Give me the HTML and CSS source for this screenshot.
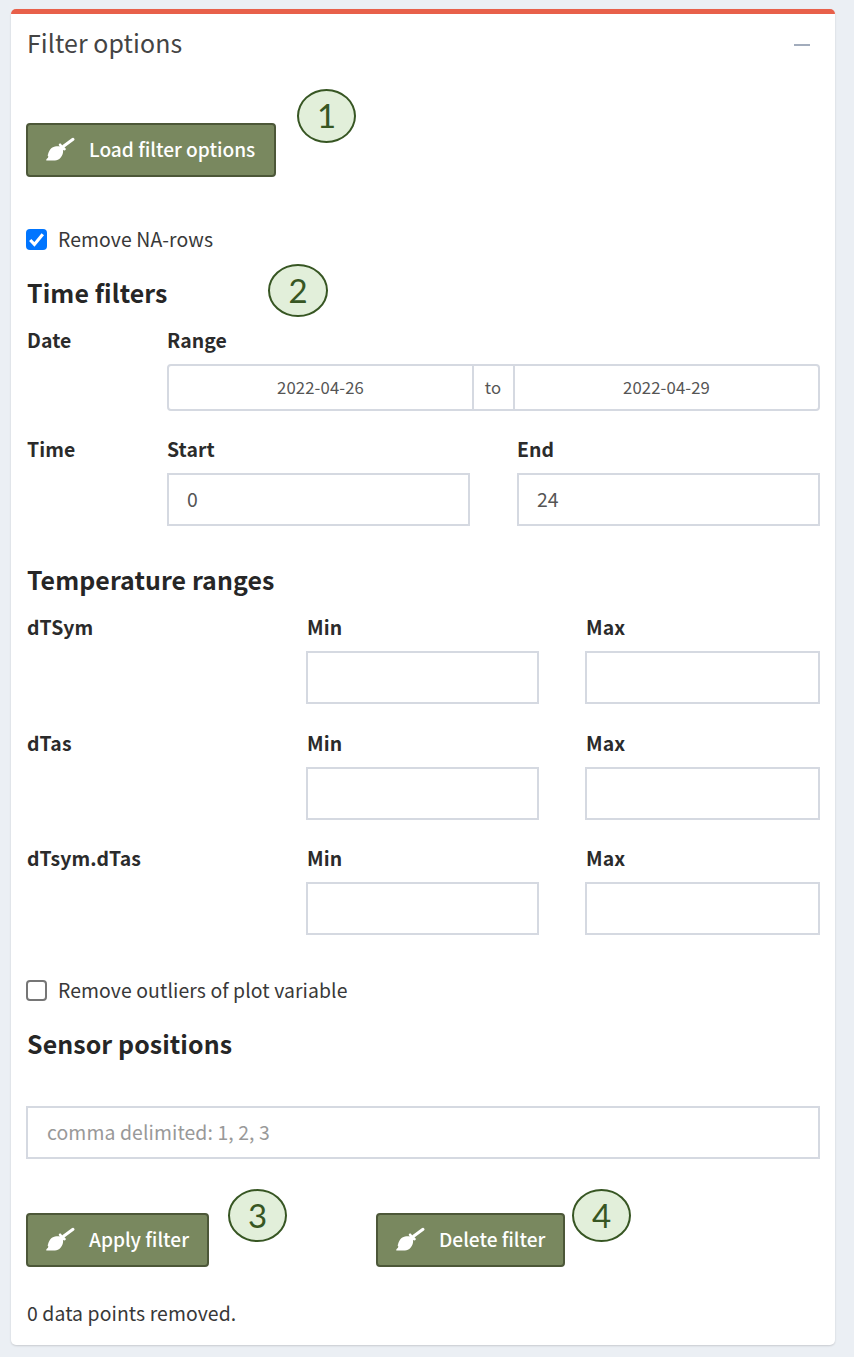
FILE: index.html
```html
<!DOCTYPE html>
<html lang="en">
<head>
<meta charset="utf-8">
<title>Filter options</title>
<link rel="stylesheet" href="styles.css">
</head>
<body>
<svg width="0" height="0" class="defs" aria-hidden="true">
  <symbol id="brush" viewBox="0 0 30 26">
    <path d="M27 2.300L17.500 9.300" fill="none" stroke="#fff" stroke-width="3" stroke-linecap="round"/>
    <path d="M13.300 6.700c1-.6 1.900 0 2.300 1.100l3.900 3.500c.6 1 .2 1.900-1 2.100l-1.500-.5c.9 5.400-3.600 10.700-8 10.700H.8c-1-.3-.6-1.400.3-2.100 1-.8 1.300-1.500 1.100-2.300-.6-.4-.7-1-.2-1.600C3 13.500 5 10.400 9 9.600c2-.4 3.500-.4 4.800-.1l-1-1.500c-.1-.5 0-.9.5-1.300z"/>
  </symbol>
</svg>
<main class="box">
  <header class="box-header">
    <h1 class="title">Filter options</h1>
    <button class="collapse" aria-label="Collapse"></button>
  </header>

  <div class="load-row">
    <button class="btn load"><svg class="icon"><use href="#brush"/></svg><span>Load filter options</span></button>
  </div>

  <label class="check check-na"><span class="tick on"><svg viewBox="0 0 20 20"><path d="M4 10.500l4 4.200 8-9.700"/></svg></span><span>Remove NA-rows</span></label>

  <h2 class="heading h-time">Time filters</h2>
  <section class="row time-row first">
    <b>Date</b>
    <div class="range">
      <b>Range</b>
      <div class="daterange"><span>2022-04-26</span><span class="to">to</span><span>2022-04-29</span></div>
    </div>
  </section>
  <section class="row time-row second">
    <b>Time</b>
    <div><b>Start</b><div class="input">0</div></div>
    <div><b>End</b><div class="input">24</div></div>
  </section>

  <h2 class="heading h-temp">Temperature ranges</h2>
  <div class="temps">
    <section class="row temp-row"><b>dTSym</b><div><b>Min</b><div class="input"></div></div><div><b>Max</b><div class="input"></div></div></section>
    <section class="row temp-row"><b>dTas</b><div><b>Min</b><div class="input"></div></div><div><b>Max</b><div class="input"></div></div></section>
    <section class="row temp-row"><b>dTsym.dTas</b><div><b>Min</b><div class="input"></div></div><div><b>Max</b><div class="input"></div></div></section>
  </div>

  <label class="check check-out"><span class="tick"></span><span>Remove outliers of plot variable</span></label>

  <h2 class="heading h-sensor">Sensor positions</h2>
  <div class="input sensor">comma delimited: 1, 2, 3</div>

  <div class="actions">
    <button class="btn apply"><svg class="icon"><use href="#brush"/></svg><span>Apply filter</span></button>
    <button class="btn delete"><svg class="icon"><use href="#brush"/></svg><span>Delete filter</span></button>
  </div>
  <p class="status">0 data points removed.</p>

  <span class="badge b1">1</span>
  <span class="badge b2">2</span>
  <span class="badge b3">3</span>
  <span class="badge b4">4</span>
</main>
</body>
</html>
```
FILE: styles.css
```css
* { box-sizing: border-box; }
body {
  margin: 0;
  padding: 9px 19px 12px 11px;
  background: #ebeff4;
  color: #383838;
  font: 19.4px/30px "Noto Sans CJK SC", "Noto Sans", sans-serif;
  letter-spacing: .005em;
}
.defs { position: absolute; }
.box {
  position: relative;
  height: 1336px;
  padding: 0 15px;
  background: #fff;
  border-top: 5px solid #e8604a;
  border-radius: 5px;
  box-shadow: 0 1px 2px rgba(0, 0, 0, .15);
}
.box-header { display: flex; justify-content: space-between; padding: 13px 10px 0 1px; height: 60px; }
.title { margin: 0; font-size: 24.9px; font-weight: 400; line-height: 30px; color: #444; }
.collapse { width: 16px; height: 2px; margin-top: 17px; padding: 0; border: 0; background: #a2acbc; }
.load-row { margin-top: 49px; }
.btn {
  display: flex;
  align-items: center;
  height: 54px;
  padding: 0 0 0 18px;
  border: 2px solid #4c5738;
  border-radius: 4px;
  background: #79885f;
  color: #fff;
  font: 500 19.1px/30px "Noto Sans CJK SC", "Noto Sans", sans-serif;
  letter-spacing: 0;
  white-space: nowrap;
}
.btn span { margin-top: -2px; }
.icon { width: 30px; height: 26px; margin-right: 13px; fill: #fff; flex: none; }
.load { width: 250px; }
.apply { width: 183px; }
.delete { width: 189px; }
.check { display: flex; align-items: center; height: 30px; white-space: nowrap; }
.check-na { margin-top: 47px; }
.check-out { margin-top: 40px; }
.tick { width: 21px; height: 21px; margin-right: 11px; border: 2px solid #767676; border-radius: 4px; background: #fff; }
.tick.on { border: 0; background: #0075ff; }
.tick svg { display: block; width: 21px; height: 21px; fill: none; stroke: #fff; stroke-width: 3; }
.heading { margin: 0 0 0 1px; font-size: 24.9px; font-weight: 700; line-height: 32px; color: #262626; }
.h-time { margin-top: 22px; }
.h-temp { margin-top: 37px; }
.h-sensor { margin-top: 22px; }
.row { display: grid; column-gap: 47px; }
.row b { display: block; height: 30px; color: #2b2b2b; white-space: nowrap; }
.row > b, .temp-row b { padding-left: 1px; }
.time-row { grid-template-columns: 94px 1fr 1fr; }
.temp-row { grid-template-columns: 233px 233px 1fr; }
.temp-row > div:last-child { margin-left: -1px; }
.first { margin-top: 17px; }
.second { margin-top: 23px; }
.range { grid-column: 2 / 4; }
.daterange {
  display: grid;
  grid-template-columns: 1fr 43px 1fr;
  height: 47px;
  margin-top: 9px;
  border: 2px solid #d5d9e1;
  border-radius: 4px;
  font-size: 16.7px;
  letter-spacing: .008em;
  line-height: 42px;
  text-align: center;
  color: #555;
}
.daterange .to { padding-right: 1px; border: solid #d5d9e1; border-width: 0 2px; }
.input { height: 53px; margin-top: 9px; padding: 0 18px; border: 2px solid #d5d9e1; line-height: 48px; color: #555; }
.temps { display: flex; flex-direction: column; gap: 23.500px; margin-top: 17px; }
.sensor { margin-top: 47px; padding-left: 19px; line-height: 47px; color: #999; }
.actions { display: grid; grid-template-columns: 350px 1fr; margin-top: 54px; }
.status { margin: 31px 0 0 1px; }
.badge {
  position: absolute;
  width: 59px;
  height: 53px;
  border: 2px solid #375623;
  border-radius: 50%;
  background: #e2efda;
  color: #375623;
  font: 33px/48px Lato, sans-serif;
  letter-spacing: 0;
  text-align: center;
}
.b1 { left: 286px; top: 75px; height: 54px; }
.b2 { left: 257px; top: 250px; width: 60px; }
.b3 { left: 217px; top: 1175px; }
.b4 { left: 561px; top: 1175px; }
```
